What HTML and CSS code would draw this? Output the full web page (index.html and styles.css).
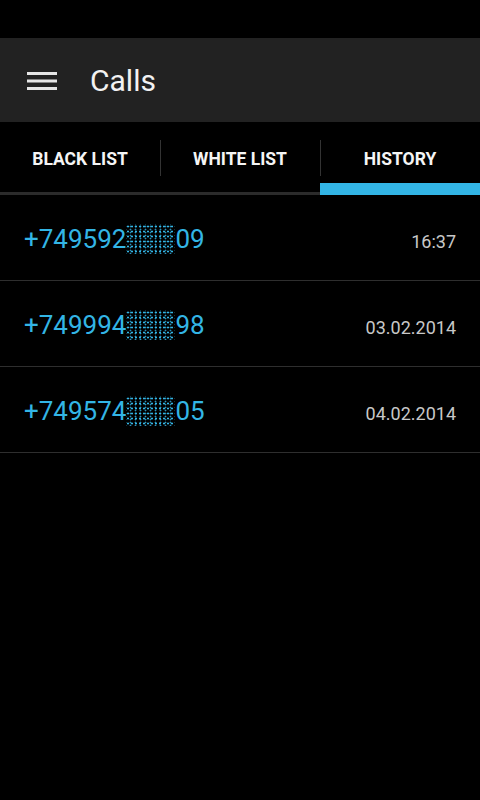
FILE: index.html
```html
<!DOCTYPE html>
<html lang="en">
<head>
  <meta charset="UTF-8">
  <meta name="viewport" content="width=device-width, initial-scale=1.0">
  <title>Calls</title>
  <link rel="stylesheet" href="styles.css">
</head>
<body>
  <div class="status-bar"></div>

  <div class="action-bar">
    <svg class="menu-icon" width="30" height="20" viewBox="0 0 30 20">
      <rect x="0" y="1" width="30" height="3" fill="#e6e6e6"/>
      <rect x="0" y="8.5" width="30" height="3" fill="#e6e6e6"/>
      <rect x="0" y="16" width="30" height="3" fill="#e6e6e6"/>
    </svg>
    <span class="title">Calls</span>
  </div>

  <div class="tabs">
    <div class="tab">Black list</div>
    <div class="tab">White list</div>
    <div class="tab active">History</div>
  </div>

  <ul class="call-list">
    <li class="call">
      <span class="number">+749592<span class="hidden-digits"></span>09</span>
      <span class="date">16:37</span>
    </li>
    <li class="call">
      <span class="number">+749994<span class="hidden-digits"></span>98</span>
      <span class="date">03.02.2014</span>
    </li>
    <li class="call">
      <span class="number">+749574<span class="hidden-digits"></span>05</span>
      <span class="date">04.02.2014</span>
    </li>
  </ul>
</body>
</html>
```

FILE: styles.css
```css
body {
  margin: 0;
  background-color: #000;
  font-family: Roboto, "Noto Sans", sans-serif;
  color: #fff;
}
.status-bar {
  height: 38px;
  background-color: #000;
}
.action-bar {
  height: 84px;
  background-color: #222;
  display: flex;
  align-items: center;
  padding-left: 27px;
}
.menu-icon {
  display: block;
  margin-top: 1px;
}
.title {
  margin-left: 33px;
  font-size: 30px;
  color: #f2f2f2;
}
.tabs {
  display: flex;
  height: 70px;
  border-bottom: 3px solid #2b2b2b;
}
.tab {
  flex: 1;
  display: flex;
  justify-content: center;
  align-items: center;
  padding-top: 4px;
  position: relative;
  font-size: 17.5px;
  font-weight: bold;
  text-transform: uppercase;
  color: #f5f5f5;
}
/* séparateur vertical entre les onglets */
.tab + .tab::before {
  content: "";
  position: absolute;
  left: 0;
  top: 18px;
  height: 36px;
  width: 1px;
  background-color: #333;
}
.tab.active::after {
  content: "";
  position: absolute;
  left: 0;
  right: 0;
  bottom: -3px;
  height: 12px;
  background-color: #33b5e5;
}
.call-list {
  list-style: none;
  margin: 0;
  padding: 0;
}
.call {
  height: 85px;
  border-bottom: 1px solid #2e2e2e;
  display: flex;
  align-items: center;
  justify-content: space-between;
  padding: 0 24px;
}
.number {
  font-size: 26px;
  color: #33b5e5;
  margin-top: 2px;
}
.hidden-digits {
  display: inline-block;
  width: 49px;
  height: 30px;
  vertical-align: -6px;
  background-image:
    radial-gradient(circle, #33b5e5 0.9px, transparent 1.2px),
    radial-gradient(circle, #2a90b8 0.8px, transparent 1.1px);
  background-size: 4px 5px, 5px 3px;
  background-position: 0 0, 2px 1px;
}
.date {
  font-size: 18px;
  color: #c8c8c8;
  margin-top: 8px;
}
```
